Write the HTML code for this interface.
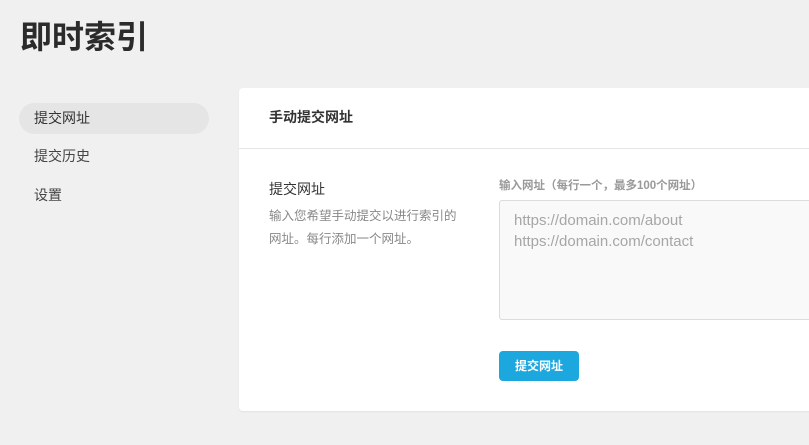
<!DOCTYPE html>
<html><head><meta charset="utf-8"><style>
*{margin:0;padding:0;box-sizing:border-box}
body{width:809px;height:445px;overflow:hidden;background:#f0f0f0;font-family:"Liberation Sans","Noto Sans CJK SC",sans-serif;position:relative;color:#333}
.abs{position:absolute}
h1{position:absolute;left:20px;top:17px;font-size:32px;font-weight:bold;color:#2b2b2b;line-height:40px}
.pill{left:19px;top:103px;width:190px;height:31px;border-radius:16px;background:#e5e5e5}
.nav{left:34px;font-size:14px;color:#444;line-height:20px}
.card{left:239px;top:88px;width:600px;height:323px;background:#fff;border-radius:4px;box-shadow:0 1px 2px rgba(0,0,0,.06)}
.ta{left:499px;top:200px;width:340px;height:120px;background:#f9f9f9;border:1px solid #dcdcdc;border-radius:3px;padding:9px 14px;font-size:15px;line-height:21px;color:#a6a6a6}
.btn{left:499px;top:351px;width:80px;height:30px;background:#1da7df;border-radius:4px;color:#fff;font-size:12px;font-weight:bold;text-align:center;line-height:30px}
</style></head><body>
<h1>即时索引</h1>
<div class="abs pill"></div>
<div class="abs nav" style="top:108px;color:#333">提交网址</div>
<div class="abs nav" style="top:146px">提交历史</div>
<div class="abs nav" style="top:185px">设置</div>
<div class="abs card"></div>
<div class="abs" style="left:269px;top:107px;font-size:14px;font-weight:bold;line-height:20px;color:#333">手动提交网址</div>
<div class="abs" style="left:239px;top:148px;width:570px;height:1px;background:#e6e6e6"></div>
<div class="abs" style="left:269px;top:179px;font-size:14px;line-height:20px;color:#333">提交网址</div>
<div class="abs" style="left:269px;top:205px;font-size:12.5px;line-height:23px;color:#888;width:196px">输入您希望手动提交以进行索引的网址。每行添加一个网址。</div>
<div class="abs" style="left:499px;top:178px;font-size:11.5px;font-weight:bold;line-height:16px;color:#999">输入网址（每行一个，最多100个网址）</div>
<div class="abs ta">https://domain.com/about<br>https://domain.com/contact</div>
<div class="abs btn">提交网址</div>
</body></html>
